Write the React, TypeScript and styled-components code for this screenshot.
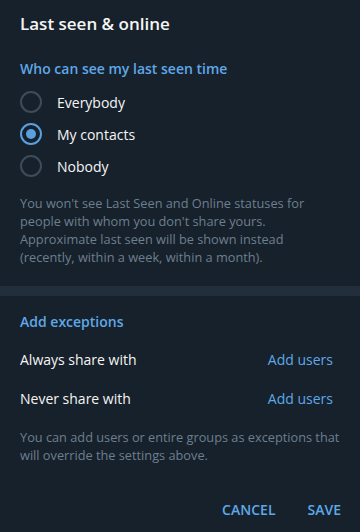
import React, { useState } from "react";
import styled, { createGlobalStyle } from "styled-components";

const Global = createGlobalStyle`
  html, body { margin: 0; padding: 0; background: #17212b; }
  body { font-family: "Open Sans", "Noto Sans", sans-serif; -webkit-font-smoothing: antialiased; }
  * { box-sizing: border-box; }
`;

const Box = styled.div`
  width: 360px;
  height: 532px;
  background: #17212b;
  display: flex;
  flex-direction: column;
  overflow: hidden;
`;

const Title = styled.div`
  padding: 13px 20px 0 20px;
  height: 47px;
  font-size: 17px;
  font-weight: 600;
  color: #f5f5f5;
  line-height: 22px;
`;

const Section = styled.div`
  display: flex;
  flex-direction: column;
`;

const SectionHeader = styled.div<{ $top: number; $height: number }>`
  padding: ${(p) => p.$top}px 20px 0 20px;
  height: ${(p) => p.$height}px;
  font-size: 14px;
  font-weight: 600;
  color: #5fa8e8;
  line-height: 22px;
`;

const RadioRow = styled.label`
  display: flex;
  align-items: center;
  height: 32px;
  padding: 0 20px;
  gap: 15px;
  cursor: pointer;
  font-size: 14px;
  color: #f5f5f5;
`;

const Circle = styled.span<{ $on: boolean }>`
  width: 22px;
  height: 22px;
  border-radius: 50%;
  border: 2px solid ${(p) => (p.$on ? "#5a9fe0" : "#3e4b59")};
  display: flex;
  align-items: center;
  justify-content: center;
  &::after {
    content: "";
    width: 10px;
    height: 10px;
    border-radius: 50%;
    background: #5a9fe0;
    display: ${(p) => (p.$on ? "block" : "none")};
  }
`;

const About = styled.div<{ $top: number; $bottom: number; $right: number }>`
  padding: ${(p) => p.$top}px ${(p) => p.$right}px ${(p) => p.$bottom}px 20px;
  font-size: 12.75px;
  line-height: 18px;
  color: #6d7f8f;
`;

const Divider = styled.div`
  height: 10px;
  background: #232e3c;
`;

const LinkRow = styled.div`
  display: flex;
  align-items: center;
  justify-content: space-between;
  height: 39px;
  padding: 0 27px 0 20px;
  font-size: 14px;
  color: #f5f5f5;
`;

const Link = styled.span`
  color: #5fa8e8;
`;

const Buttons = styled.div`
  margin-top: auto;
  display: flex;
  justify-content: flex-end;
  gap: 32px;
  padding: 0 19px 0 0;
  height: 46px;
  align-items: center;
`;

const Btn = styled.button`
  background: none;
  border: none;
  padding: 0;
  font-family: inherit;
  font-size: 14px;
  font-weight: 600;
  color: #5fa8e8;
  text-transform: uppercase;
  cursor: pointer;
`;

const options = ["Everybody", "My contacts", "Nobody"];

export default function App() {
  const [sel, setSel] = useState(1);
  return (
    <>
      <Global />
      <Box>
        <Title>Last seen &amp; online</Title>
        <Section>
          <SectionHeader $top={11} $height={39}>Who can see my last seen time</SectionHeader>
          {options.map((o, i) => (
            <RadioRow key={o} onClick={() => setSel(i)}>
              <Circle $on={sel === i} />
              {o}
            </RadioRow>
          ))}
          <About $top={12} $bottom={20} $right={30}>
            You won't see Last Seen and Online statuses for people with whom you don't share yours. Approximate last seen will be shown instead (recently, within a week, within a month).
          </About>
        </Section>
        <Divider />
        <Section>
          <SectionHeader $top={15} $height={44}>Add exceptions</SectionHeader>
          <LinkRow>
            <span>Always share with</span>
            <Link>Add users</Link>
          </LinkRow>
          <LinkRow>
            <span>Never share with</span>
            <Link>Add users</Link>
          </LinkRow>
          <About $top={10} $bottom={0} $right={14}>
            You can add users or entire groups as exceptions that will override the settings above.
          </About>
        </Section>
        <Buttons>
          <Btn>Cancel</Btn>
          <Btn>Save</Btn>
        </Buttons>
      </Box>
    </>
  );
}
